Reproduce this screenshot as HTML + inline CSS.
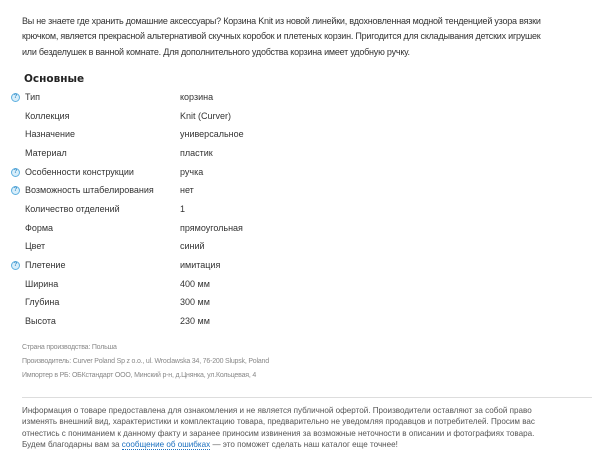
<!DOCTYPE html>
<html><head><meta charset="utf-8"><style>
body{margin:0;width:592px;height:466px;background:#fff;font-family:"Liberation Sans",sans-serif;color:#333;overflow:hidden;position:relative}
.p{position:absolute;left:22px;top:14px;font-size:9px;line-height:15.3px;white-space:nowrap;letter-spacing:-0.22px}
h3{position:absolute;left:24px;top:73px;margin:0;font-family:"DejaVu Sans",sans-serif;font-size:10.5px;font-weight:bold;color:#222}
.r{position:absolute;left:0;font-size:9px;height:14px;line-height:14px}
.r .l{position:absolute;left:25px;white-space:nowrap}
.r .v{position:absolute;left:180px;white-space:nowrap}
.q{position:absolute;left:11px;top:3px;width:7px;height:7px;border-radius:50%;border:1px solid #5fb0e0;background:#d8eefa;font-size:6px;line-height:7px;text-align:center;color:#3a8fc8;font-weight:bold;letter-spacing:0}
.g{position:absolute;left:22px;font-size:7px;color:#888;white-space:nowrap;letter-spacing:-0.2px}
.hr{position:absolute;left:22px;right:0;top:397px;border-top:1px solid #ddd}
.d{position:absolute;left:22px;top:405px;font-size:8.1px;line-height:11.4px;color:#555;white-space:nowrap}
.d a{color:#1a6fbf;text-decoration:none;border-bottom:1px dotted #1a6fbf}
</style></head><body>
<div class="p">Вы не знаете где хранить домашние аксессуары? Корзина Knit из новой линейки, вдохновленная модной тенденцией узора вязки<br>крючком, является прекрасной альтернативой скучных коробок и плетеных корзин. Пригодится для складывания детских игрушек<br>или безделушек в ванной комнате. Для дополнительного удобства корзина имеет удобную ручку.</div>
<h3>Основные</h3>
<div class="r" style="top:90px"><span class="q">?</span><span class="l">Тип</span><span class="v">корзина</span></div>
<div class="r" style="top:109px"><span class="l">Коллекция</span><span class="v">Knit (Curver)</span></div>
<div class="r" style="top:127px"><span class="l">Назначение</span><span class="v">универсальное</span></div>
<div class="r" style="top:146px"><span class="l">Материал</span><span class="v">пластик</span></div>
<div class="r" style="top:165px"><span class="q">?</span><span class="l">Особенности конструкции</span><span class="v">ручка</span></div>
<div class="r" style="top:183px"><span class="q">?</span><span class="l">Возможность штабелирования</span><span class="v">нет</span></div>
<div class="r" style="top:202px"><span class="l">Количество отделений</span><span class="v">1</span></div>
<div class="r" style="top:221px"><span class="l">Форма</span><span class="v">прямоугольная</span></div>
<div class="r" style="top:239px"><span class="l">Цвет</span><span class="v">синий</span></div>
<div class="r" style="top:258px"><span class="q">?</span><span class="l">Плетение</span><span class="v">имитация</span></div>
<div class="r" style="top:277px"><span class="l">Ширина</span><span class="v">400 мм</span></div>
<div class="r" style="top:295px"><span class="l">Глубина</span><span class="v">300 мм</span></div>
<div class="r" style="top:314px"><span class="l">Высота</span><span class="v">230 мм</span></div>
<div class="g" style="top:344px">Страна производства: Польша</div>
<div class="g" style="top:358px">Производитель: Curver Poland Sp z o.o., ul. Wroclawska 34, 76-200 Slupsk, Poland</div>
<div class="g" style="top:372px">Импортер в РБ: ОБКстандарт ООО, Минский р-н, д.Цнянка, ул.Кольцевая, 4</div>
<div class="hr"></div>
<div class="d">Информация о товаре предоставлена для ознакомления и не является публичной офертой. Производители оставляют за собой право<br>изменять внешний вид, характеристики и комплектацию товара, предварительно не уведомляя продавцов и потребителей. Просим вас<br>отнестись с пониманием к данному факту и заранее приносим извинения за возможные неточности в описании и фотографиях товара.<br>Будем благодарны вам за <a>сообщение об ошибках</a> — это поможет сделать наш каталог еще точнее!</div>
</body></html>
